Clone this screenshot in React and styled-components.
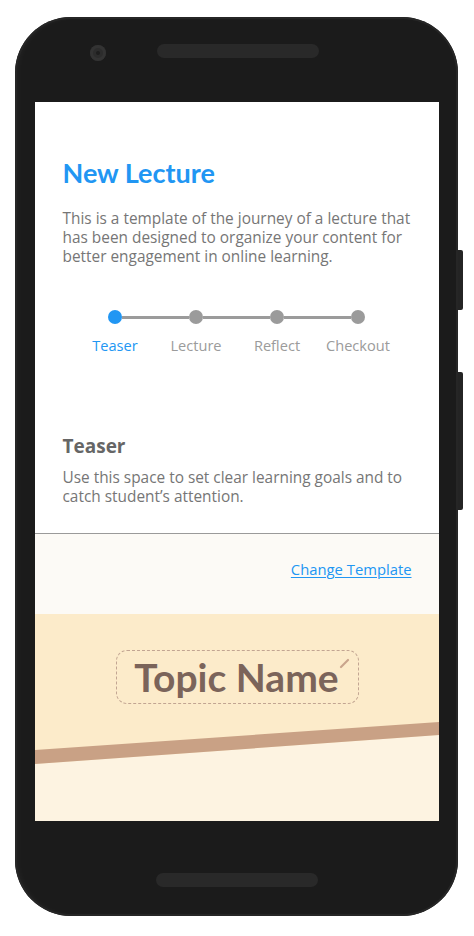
import React from 'react'
import styled, { createGlobalStyle } from 'styled-components'

const GlobalStyle = createGlobalStyle`
  html, body {
    margin: 0;
    padding: 0;
    background: #ffffff;
  }
  body {
    font-family: "Open Sans", "Noto Sans", "Liberation Sans", sans-serif;
  }
`;

const Page = styled.div`
  width: 474px;
  height: 936px;
  padding: 17px 0 0 15px;
  box-sizing: border-box;
`;

const Phone = styled.div`
  position: relative;
  width: 443px;
  height: 899px;
  box-sizing: border-box;
  background: #1b1b1b;
  border-radius: 56px;
  box-shadow: inset 0 0 0 2px #262626, inset 3px 0 6px rgba(255, 255, 255, 0.04);
  display: flex;
  flex-direction: column;
  align-items: center;
`;

const SideButton = styled.div`
  position: absolute;
  right: -5px;
  top: ${p => p.$top}px;
  width: 5px;
  height: ${p => p.$h}px;
  background: #242424;
  border-radius: 0 2px 2px 0;
`;

const TopBezel = styled.div`
  width: 100%;
  height: 85px;
  display: flex;
  align-items: flex-start;
  padding: 27px 0 0 75px;
  box-sizing: border-box;
`;

const Camera = styled.div`
  width: 16px;
  height: 16px;
  border-radius: 50%;
  background: #2c2c2c;
  box-shadow: inset 0 0 0 3px #333;
  display: flex;
  align-items: center;
  justify-content: center;
  margin-top: 1px;

  &::after {
    content: '';
    width: 4px;
    height: 4px;
    border-radius: 50%;
    background: #1e1e1e;
  }
`;

const Speaker = styled.div`
  width: 162px;
  height: 14px;
  border-radius: 7px;
  background: #292929;
  margin-left: ${p => p.$ml || 0}px;
  margin-top: ${p => p.$mt || 0}px;
`;

const Screen = styled.div`
  width: 404px;
  height: 719px;
  background: #ffffff;
  display: flex;
  flex-direction: column;
  overflow: hidden;
`;

const Header = styled.div`
  padding: 55px 22px 0 28px;
`;

const Title = styled.h1`
  margin: 0;
  font-family: "Lato", "Open Sans", sans-serif;
  font-size: 27px;
  line-height: 32px;
  font-weight: 700;
  color: #2196f3;
`;

const Description = styled.p`
  margin: 20px 0 0;
  font-size: 15.4px;
  line-height: 19px;
  color: #767676;
`;

const Stepper = styled.div`
  margin: 44px 0 0 12px;
  display: grid;
  grid-template-columns: repeat(4, 81px);
`;

const Step = styled.div`
  display: flex;
  flex-direction: column;
  align-items: center;
`;

const DotRow = styled.div`
  width: 100%;
  height: 14px;
  display: flex;
  align-items: center;
`;

const Segment = styled.div`
  flex: 1;
  height: 3px;
  background: ${p => (p.$off ? 'transparent' : '#9b9b9b')};
`;

const Dot = styled.div`
  flex: none;
  width: 14px;
  height: 14px;
  border-radius: 50%;
  background: ${p => (p.$active ? '#2196f3' : '#9b9b9b')};
`;

const StepLabel = styled.div`
  margin-top: 11px;
  font-size: 14.6px;
  line-height: 20px;
  color: ${p => (p.$active ? '#2196f3' : '#9b9b9b')};
  white-space: nowrap;
`;

const Section = styled.div`
  padding: 79px 22px 27px 28px;
  border-bottom: 1px solid #9a9a9a;
`;

const SectionTitle = styled.h2`
  margin: 0;
  font-size: 19px;
  line-height: 24px;
  font-weight: 700;
  color: #666666;
`;

const SectionText = styled.p`
  margin: 10px 0 0;
  font-size: 15.4px;
  line-height: 19px;
  color: #767676;
`;

const TemplateBar = styled.div`
  height: 80px;
  box-sizing: border-box;
  background: #fcfaf6;
  display: flex;
  justify-content: flex-end;
  align-items: flex-start;
  padding: 25px 27px 0 0;
`;

const Link = styled.a`
  font-size: 14.8px;
  line-height: 20px;
  color: #2196f3;
  text-decoration: underline;
  text-decoration-thickness: 1px;
  text-underline-offset: 2px;
  cursor: pointer;
`;

const TopicCard = styled.div`
  flex: 1;
  background: #fcebca;
  display: flex;
  flex-direction: column;
`;

const TopicArea = styled.div`
  height: 106px;
  display: flex;
  justify-content: center;
  align-items: flex-start;
  padding: 36px 0 0 2px;
  box-sizing: border-box;
`;

const TopicBox = styled.div`
  position: relative;
  width: 243px;
  height: 54px;
  box-sizing: border-box;
  border: 1.5px dashed #c2a592;
  border-radius: 11px;
  display: flex;
  align-items: center;
  justify-content: center;
`;

const TopicName = styled.span`
  font-family: "Lato", "Open Sans", sans-serif;
  font-size: 39px;
  line-height: 44px;
  font-weight: 700;
  color: #7b645a;
  margin-right: 2px;
`;

const EditMark = styled.svg`
  position: absolute;
  top: 6px;
  right: 7px;
`;

const Stripe = styled.svg`
  display: block;
  flex: 1;
  width: 100%;
`;

const BottomBezel = styled.div`
  flex: 1;
  display: flex;
  justify-content: center;
`;

const steps = ['Teaser', 'Lecture', 'Reflect', 'Checkout'];

export default function App() {
  return (
    <Page>
      <GlobalStyle />
      <Phone>
        <SideButton $top={233} $h={60} />
        <SideButton $top={355} $h={138} />
        <TopBezel>
          <Camera />
          <Speaker $ml={51} />
        </TopBezel>
        <Screen>
          <Header>
            <Title>New Lecture</Title>
            <Description>
              This is a template of the journey of a lecture that has been designed to organize
              your content for better engagement in online learning.
            </Description>
            <Stepper>
              {steps.map((s, i) => (
                <Step key={s}>
                  <DotRow>
                    <Segment $off={i === 0} />
                    <Dot $active={i === 0} />
                    <Segment $off={i === steps.length - 1} />
                  </DotRow>
                  <StepLabel $active={i === 0}>{s}</StepLabel>
                </Step>
              ))}
            </Stepper>
          </Header>
          <Section>
            <SectionTitle>Teaser</SectionTitle>
            <SectionText>
              Use this space to set clear learning goals and to catch student’s attention.
            </SectionText>
          </Section>
          <TemplateBar>
            <Link>Change Template</Link>
          </TemplateBar>
          <TopicCard>
            <TopicArea>
              <TopicBox>
                <TopicName>Topic Name</TopicName>
                <EditMark width="12" height="12" viewBox="0 0 12 12">
                  <path d="M2 10 L9 3" stroke="#c9a48c" strokeWidth="2.2" strokeLinecap="round" />
                </EditMark>
              </TopicBox>
            </TopicArea>
            <Stripe viewBox="0 0 404 101" preserveAspectRatio="none">
              <rect x="0" y="0" width="404" height="101" fill="#fcebca" />
              <polygon points="0,44 404,15 404,101 0,101" fill="#fdf3e1" />
              <polygon points="0,30 404,2 404,15 0,44" fill="#c9a185" />
            </Stripe>
          </TopicCard>
        </Screen>
        <BottomBezel>
          <Speaker $mt={52} />
        </BottomBezel>
      </Phone>
    </Page>
  );
}
